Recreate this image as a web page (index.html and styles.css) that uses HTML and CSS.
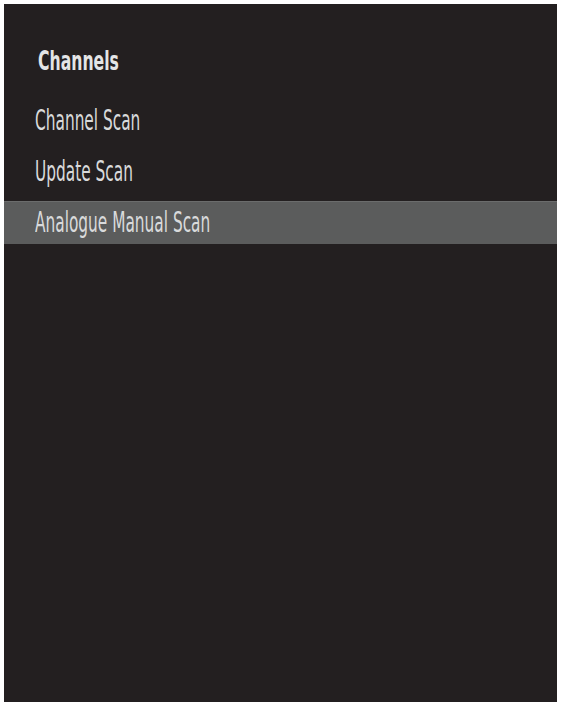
FILE: index.html
```html
<!DOCTYPE html>
<html lang="en">
<head>
    <meta charset="UTF-8">
    <title>Channels</title>
    <link rel="stylesheet" href="styles.css">
</head>
<body>
    <main class="panel">
        <h1 class="title"><span class="label">Channels</span></h1>
        <ul class="menu">
            <li class="menu-item"><span class="label">Channel Scan</span></li>
            <li class="menu-item"><span class="label">Update Scan</span></li>
            <li class="menu-item selected"><span class="label">Analogue Manual Scan</span></li>
        </ul>
    </main>
</body>
</html>
```

FILE: styles.css
```css
:root {
    --panel-bg: #231f20;
    --item-text: #d9dadb;
    --title-text: #e4e5e6;
    --selected-bg: #5b5c5c;
    --selected-edge: #6b6c6c;
}

html,
body {
    margin: 0;
    padding: 0;
    background-color: #ffffff;
}

body {
    padding: 4px 6px 5px 4px;
    height: 707px;
    box-sizing: border-box;
    font-family: 'DejaVu Sans Condensed', 'DejaVu Sans', sans-serif;
    font-stretch: condensed;
}

.panel {
    background-color: var(--panel-bg);
    height: 100%;
    padding-top: 40px;
    box-sizing: border-box;
}

/* the TV font is much narrower than anything installed */
.label {
    display: inline-block;
    transform: scaleX(0.61);
    transform-origin: left center;
    white-space: nowrap;
}

.title {
    margin: 0 0 21px 34px;
    color: var(--title-text);
    font-size: 26px;
    font-weight: bold;
    line-height: 34px;
}

.title .label {
    transform: scaleX(0.67);
}

.menu {
    list-style: none;
    margin: 0;
    padding: 0;
    display: flex;
    flex-direction: column;
    gap: 8px;
}

.menu-item {
    height: 43px;
    line-height: 43px;
    padding-left: 31px;
    color: var(--item-text);
    font-size: 28px;
    box-sizing: border-box;
}

.menu-item.selected {
    background-color: var(--selected-bg);
    border-top: 1px solid var(--selected-edge);
    line-height: 42px;
}
```
